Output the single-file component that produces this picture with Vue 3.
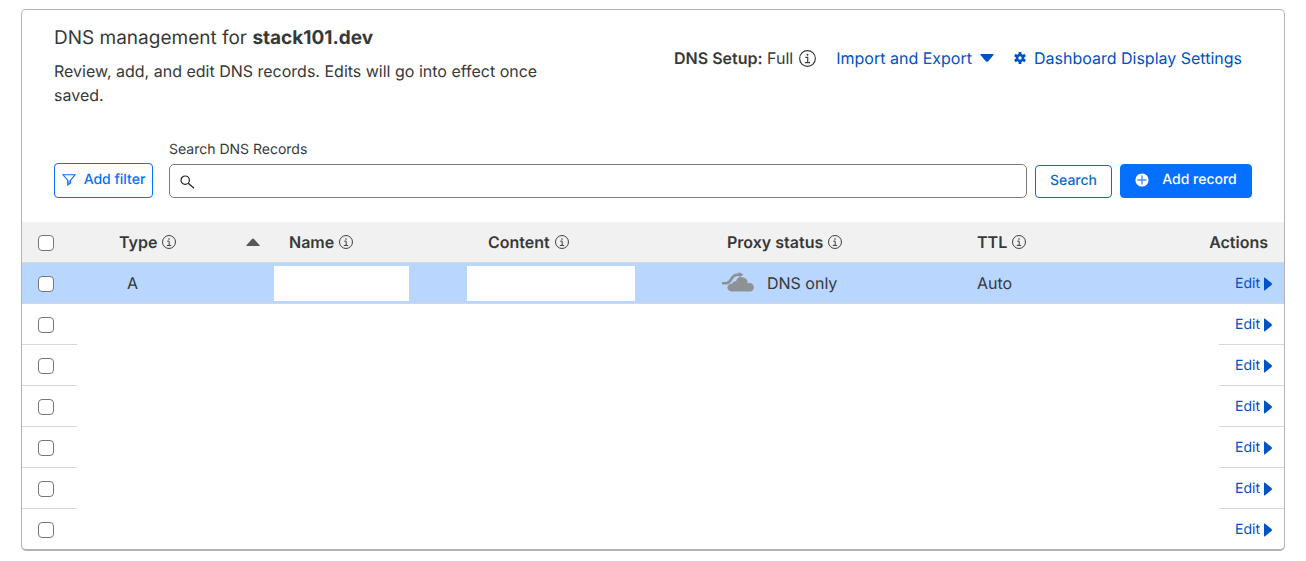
<script setup>
import { h, ref } from 'vue'

const query = ref('')
const emptyRows = [2, 3, 4, 5, 6, 7]

const InfoIcon = (props) =>
  h('svg', { width: props.size, height: props.size, viewBox: '0 0 16 16', fill: 'none', stroke: 'currentColor', 'aria-hidden': 'true' }, [
    h('circle', { cx: 8, cy: 8, r: 7.4, 'stroke-width': 1.1 }),
    h('path', { d: 'M6 7h2.200v4.900M5.500 11.900h5', 'stroke-width': 1.1 }),
    h('circle', { cx: 8, cy: 4.5, r: 0.9, fill: 'currentColor', stroke: 'none' })
  ])
InfoIcon.props = ['size']
</script>

<template>
  <main class="page">
    <section class="card">
      <header class="top">
        <div class="intro">
          <h1>DNS management for <strong>stack101.dev</strong></h1>
          <p>Review, add, and edit DNS records. Edits will go into effect once saved.</p>
        </div>
        <div class="links">
          <span class="setup"><span><b>DNS Setup:</b> Full</span><InfoIcon :size="17" /></span>
          <button type="button" class="link import">
            Import and Export
            <svg width="14" height="8" viewBox="0 0 14 8" aria-hidden="true"><path d="M1 0h12q1 0 .5 1L8 7.400q-1 .8-2 0L.5 1Q0 0 1 0Z" fill="currentColor" /></svg>
          </button>
          <a href="#" class="link settings">
            <svg width="12" height="12" viewBox="0 0 12 12" aria-hidden="true">
              <g stroke="currentColor" stroke-width="2.8"><path d="M6 0v12M.8 3l10.400 6M.8 9l10.400-6" /></g>
              <circle cx="6" cy="6" r="4.300" fill="currentColor" />
              <circle cx="6" cy="6" r="1.700" fill="#fff" />
            </svg>
            Dashboard Display Settings
          </a>
        </div>
      </header>

      <form class="tools" @submit.prevent>
        <button type="button" class="btn filter">
          <svg width="14" height="12" viewBox="0 0 14 12" fill="none" stroke="currentColor" stroke-width="1.100" aria-hidden="true">
            <path d="M1 .8h12L8.600 6.200V9L5.700 11V6.200Z" /><path d="M6 6.500h2.500V9L6 10.800Z" fill="currentColor" stroke="none" opacity=".6" />
          </svg>
          Add filter
        </button>
        <div class="field">
          <label for="dns-search">Search DNS Records</label>
          <div class="box">
            <svg width="15" height="14" viewBox="0 0 15 14" fill="none" stroke="currentColor" stroke-width="1.200" aria-hidden="true">
              <circle cx="5.200" cy="5.200" r="4.200" /><path d="M8.300 8.300 14 13.200" />
            </svg>
            <input id="dns-search" v-model="query" type="text" />
          </div>
        </div>
        <button type="submit" class="btn search">Search</button>
        <button type="button" class="btn add">
          <svg width="14" height="14" viewBox="0 0 14 14" aria-hidden="true">
            <circle cx="7" cy="7" r="6.600" fill="#fff" /><path d="M7 2.500v9M2.500 7h9" stroke="#4a8dff" stroke-width="1.400" />
          </svg>
          Add record
        </button>
      </form>

      <table>
        <colgroup>
          <col class="c-check" /><col class="c-type" /><col class="c-name" /><col class="c-content" />
          <col class="c-proxy" /><col /><col class="c-gap" /><col class="c-edit" />
        </colgroup>
        <thead>
          <tr>
            <th class="check"><input type="checkbox" aria-label="Select all records" /></th>
            <th class="type">
              <div class="head">
                Type <InfoIcon :size="14" />
                <svg class="sort" width="14" height="8" viewBox="0 0 14 8" aria-hidden="true"><path d="M.6 8Q0 7.500.6 7L6 1q1-1 2 0l5.400 6q.6.5 0 1Z" fill="#595959" /></svg>
              </div>
            </th>
            <th><div class="head">Name <InfoIcon :size="14" /></div></th>
            <th class="content"><div class="head">Content <InfoIcon :size="14" /></div></th>
            <th><div class="head">Proxy status <InfoIcon :size="14" /></div></th>
            <th><div class="head">TTL <InfoIcon :size="14" /></div></th>
            <th colspan="2" class="actions">Actions</th>
          </tr>
        </thead>
        <tbody>
          <tr class="selected">
            <td class="check"><input type="checkbox" aria-label="Select record 1" /></td>
            <td class="kind">A</td>
            <td class="blank"><div class="mask name-mask"></div></td>
            <td class="blank"><div class="mask content-mask"></div></td>
            <td class="proxy">
              <div class="status">
                <svg width="32" height="22" viewBox="0 0 32 22" aria-hidden="true">
                  <path d="M0 11.200h4C7.500 11.200 8.500 8.500 10 6c1.500-2.400 3-3.200 5-3.200h3" fill="none" stroke="#8f9293" stroke-width="2.600" />
                  <path d="M16.500 0 21.500 2.500l-4.500 3.400Z" fill="#8f9293" />
                  <path d="M9.500 19.500a3.900 3.900 0 0 1-2.700-6.800 3.500 3.500 0 0 1 3.200-.9A3.600 3.600 0 0 1 14 9.200a6 6 0 0 1 11.700 2.200 4.200 4.200 0 0 1 6.100 3.900q0 4.200-4.400 4.200Z" fill="#8f9293" stroke="#b9d6ff" stroke-width="1" paint-order="stroke" />
                </svg>
                DNS only
              </div>
            </td>
            <td colspan="2">Auto</td>
            <td class="edit"><button type="button" class="link small">Edit<svg width="8" height="14" viewBox="0 0 8 14" aria-hidden="true"><path d="M0 1Q0 0 1 .7L7.500 6q.9 1 0 2L1 13.300Q0 14 0 13Z" fill="currentColor" /></svg></button></td>
          </tr>
          <tr v-for="n in emptyRows" :key="n">
            <td class="check"><input type="checkbox" :aria-label="`Select record ${n}`" /></td>
            <td colspan="6" class="void"></td>
            <td class="edit"><button type="button" class="link small">Edit<svg width="8" height="14" viewBox="0 0 8 14" aria-hidden="true"><path d="M0 1Q0 0 1 .7L7.500 6q.9 1 0 2L1 13.300Q0 14 0 13Z" fill="currentColor" /></svg></button></td>
          </tr>
        </tbody>
      </table>
    </section>
  </main>
</template>

<style>
body { background: #fff; }
</style>

<style scoped>
.page {
  padding: 9px 21px 10px;
  font-family: Inter, "Liberation Sans", sans-serif;
  font-size: 16px;
  line-height: 24px;
  color: #36393a;
  text-rendering: geometricPrecision;
}
.page *, .page *::before { box-sizing: border-box; }
svg { display: block; flex: none; }
.card { border: 1px solid #b3b3b3; border-bottom-width: 2px; border-radius: 5px; overflow: hidden; }
.top { display: flex; justify-content: space-between; align-items: flex-start; padding: 16px 42px 0 32px; }
.intro { width: 490px; }
h1 { margin: 0; font-size: 19px; line-height: 24px; font-weight: 400; }
h1 strong { font-weight: 700; }
p { margin: 9px 0 0; }
.links { display: flex; align-items: center; padding-top: 20px; white-space: nowrap; }
.setup { display: flex; align-items: center; gap: 6px; }
b { font-weight: 600; }
button { font: inherit; text-rendering: inherit; cursor: pointer; }
.link { display: flex; align-items: center; padding: 0; border: 0; background: none; color: #0051c3; text-decoration: none; }
.import { gap: 8px; margin-left: 20px; }
.settings { gap: 8px; margin-left: 20px; }
.tools { display: flex; align-items: flex-end; padding: 33px 32px 24px; font-size: 14px; }
.btn { display: flex; align-items: center; justify-content: center; border: 1px solid #056fff; border-radius: 4px; background: #fff; color: #056fff; font-size: 14px; line-height: 20px; font-weight: 500; white-space: nowrap; padding: 0 0 2px; height: 34px; }
.filter { width: 99px; height: 35px; gap: 8px; }
.search { width: 77px; height: 33px; margin: 0 8px; border-color: #0b6bd3; color: #0b6bd3; }
.add { width: 132px; gap: 13px; background: #056fff; color: #fff; }
.field { flex: 1; margin-left: 16px; }
.field label { display: block; line-height: 20px; margin-bottom: 4px; }
.box { display: flex; align-items: center; gap: 8px; height: 34px; padding: 2px 10px 0; border: 1px solid #7a7a7a; border-radius: 5px; color: #222; }
.box input { flex: 1; min-width: 0; border: 0; outline: 0; background: none; font: inherit; color: inherit; }
table { width: 100%; border-collapse: separate; border-spacing: 0; table-layout: fixed; }
.c-check { width: 55px; }
.c-type { width: 196px; }
.c-name { width: 194px; }
.c-content { width: 244px; }
.c-proxy { width: 250px; }
.c-gap { width: 19px; }
.c-edit { width: 65px; }
th, td { height: 41px; padding: 0 0 0 16px; border-bottom: 1px solid #d5d7d8; text-align: left; }
th { background: #f1f1f1; font-weight: 600; }
tbody tr:last-child td { height: 40px; border-bottom: 0; }
.head { display: flex; align-items: center; gap: 5px; }
.type { padding: 0 13px 0 42px; }
.sort { margin-left: auto; }
.content { padding-left: 21px; }
.actions { text-align: right; padding: 0 16px 0 0; }
.selected td { background: #b9d6ff; }
.selected .kind { padding-left: 50px; }
.selected .blank { padding: 0; }
.mask { height: 35px; background: #fff; }
.name-mask { width: 135px; margin-left: 1px; }
.content-mask { width: 168px; }
.void { border-bottom: 0; }
.selected .proxy { padding-left: 11px; }
.status { display: flex; align-items: center; gap: 13px; }
.edit { padding-top: 2px; }
.small { gap: 4px; font-size: 14px; line-height: 20px; }
input[type="checkbox"] { display: block; appearance: none; width: 16px; height: 16px; margin: 1px 0 0; border: 1px solid #767676; border-radius: 4px; background: #fff; }
input[type="checkbox"]:checked { background: #056fff; }
</style>
